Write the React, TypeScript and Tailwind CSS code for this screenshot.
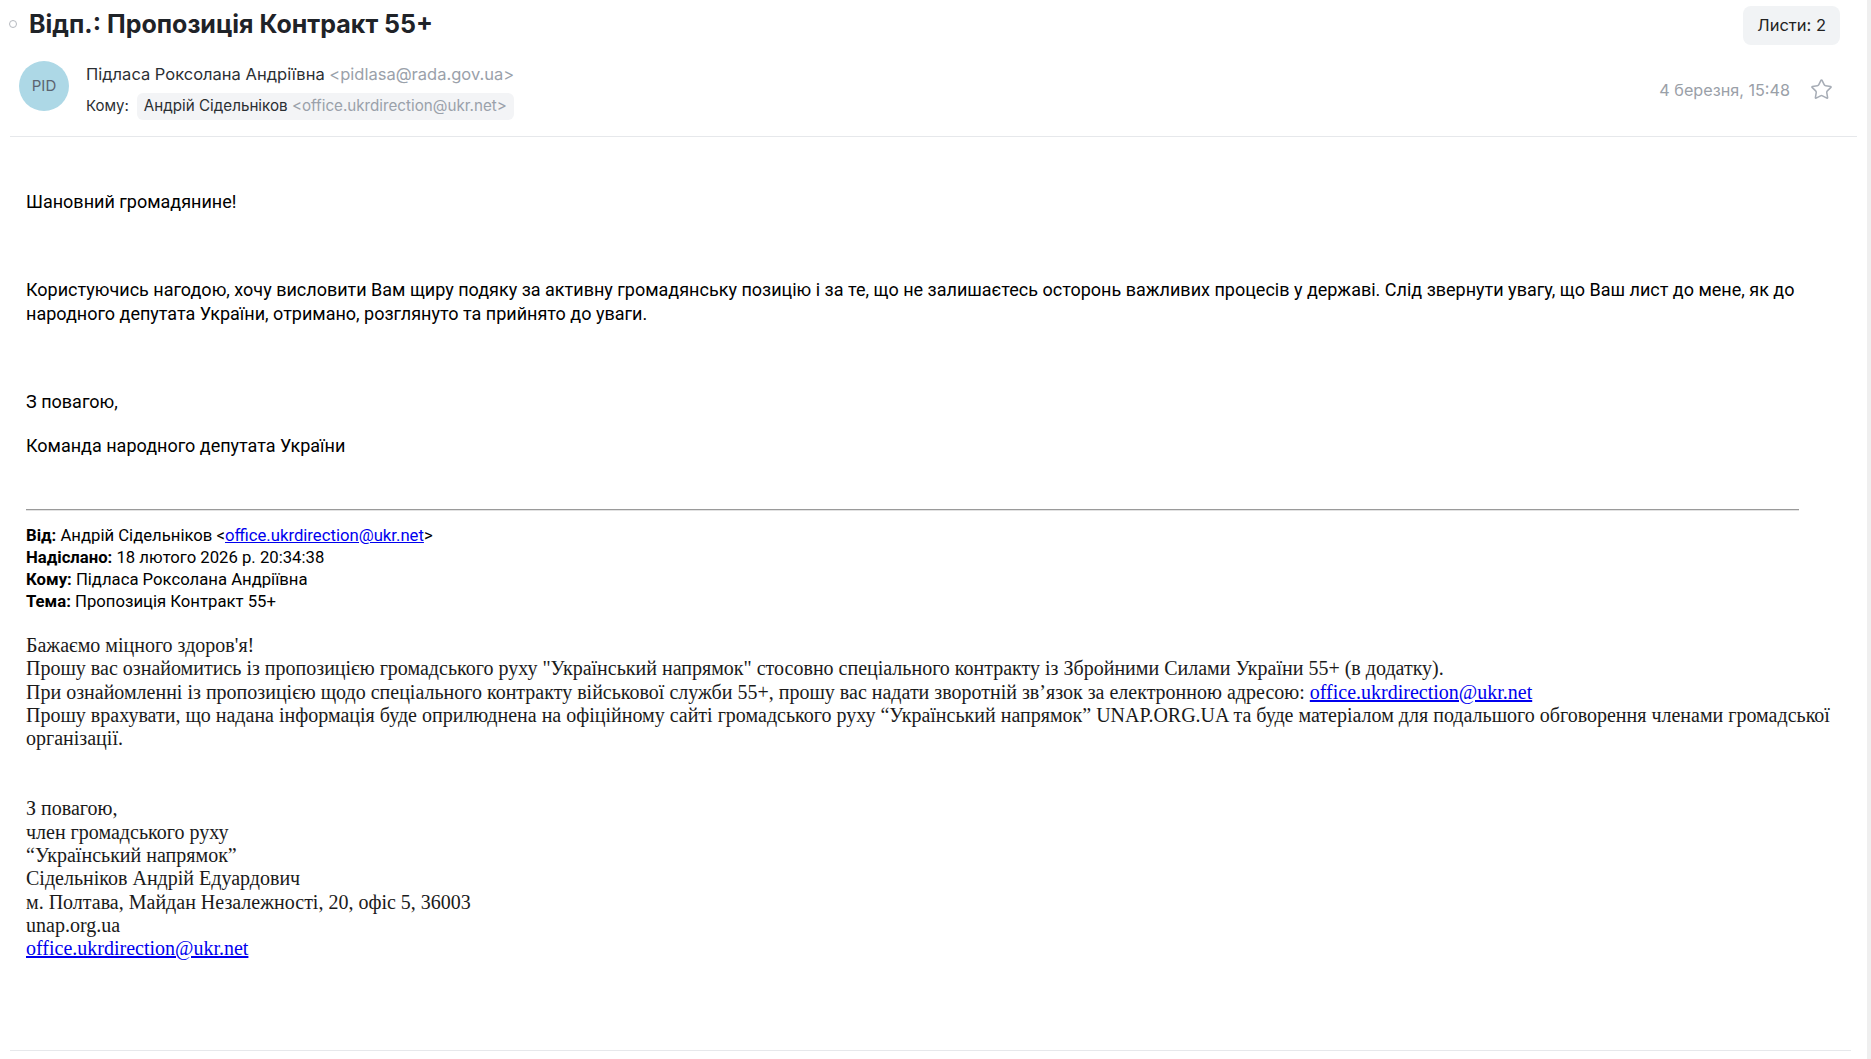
import React from "react";
import { Star } from "lucide-react";

const inter = "font-['Inter','Noto_Sans',sans-serif]";
const sans = "font-['Roboto','Noto_Sans',sans-serif]";
const serif = "font-['Liberation_Serif','Times_New_Roman',serif]";

function Link({ children }: { children: React.ReactNode }) {
  return <a className="text-[#0000ee] underline">{children}</a>;
}

export default function App() {
  return (
    <div className="flex min-h-screen bg-white">
      <div className="flex-1 flex flex-col">
        {/* Title row */}
        <div className={`flex items-start justify-between pl-[9px] pr-[27px] pt-[6px] ${inter}`}>
          <div className="flex items-center gap-[12px] h-[36px]">
            <span className="w-[8px] h-[8px] rounded-full border border-[#b5b9bf]" />
            <h1 className="text-[25px] font-bold leading-[36px] text-[#1f2328]">Відп.: Пропозиція Контракт 55+</h1>
          </div>
          <div className="h-[39px] px-[14px] rounded-lg bg-[#f1f3f5] flex items-center text-[16.5px] text-[#222]">
            Листи: 2
          </div>
        </div>

        {/* Sender row */}
        <div className={`mx-[10px] mt-[16px] pl-[9px] pr-[24px] pb-[16px] border-b border-[#e6e8eb] flex items-start justify-between ${inter}`}>
          <div className="flex items-start gap-[17px]">
            <div className="w-[50px] h-[50px] rounded-full bg-[#add8e6] flex items-center justify-center text-[15px] text-[#5b6470]">
              PID
            </div>
            <div className="flex flex-col pt-[2px]">
              <div className="text-[16.5px] leading-[22px] text-[#2b2f33]">
                Підласа Роксолана Андріївна <span className="text-[#9aa1aa]">&lt;pidlasa@rada.gov.ua&gt;</span>
              </div>
              <div className="flex items-center gap-[8px] mt-[8px]">
                <span className="text-[15px] text-[#2b2f33]">Кому:</span>
                <span className="h-[27px] px-[7px] rounded-md bg-[#f3f4f6] flex items-center text-[15.2px] text-[#2b2f33]">
                  Андрій Сідельніков&nbsp;<span className="text-[#9aa1aa]">&lt;office.ukrdirection@ukr.net&gt;</span>
                </span>
              </div>
            </div>
          </div>
          <div className="flex items-center gap-[20px] pt-[17px]">
            <span className="text-[16.2px] leading-[22px] text-[#9aa0a8]">4 березня, 15:48</span>
            <Star size={23} strokeWidth={1.6} color="#a7adb6" />
          </div>
        </div>

        {/* Body */}
        <div className="pl-[26px] pr-[22px] pt-[53px] text-black">
          <div className={`${sans} text-[18px] leading-[24px]`}>
            <p>Шановний громадянине!</p>
            <p className="mt-[64px]">
              Користуючись нагодою, хочу висловити Вам щиру подяку за активну громадянську позицію і за те, що не залишаєтесь осторонь важливих процесів у державі. Слід звернути увагу, що Ваш лист до мене, як до народного депутата України, отримано, розглянуто та прийнято до уваги.
            </p>
            <p className="mt-[64px]">З повагою,</p>
            <p className="mt-[20px]">Команда народного депутата України</p>
          </div>

          <div className="mt-[51px] w-[1773px] border-t-[1px] border-b-[1px] border-t-[#9a9a9a] border-b-[#e2e2e2]" />

          <div className={`${sans} mt-[14px] text-[16.7px] leading-[22px]`}>
            <div><b>Від:</b> Андрій Сідельніков &lt;<Link>office.ukrdirection@ukr.net</Link>&gt;</div>
            <div><b>Надіслано:</b> 18 лютого 2026 р. 20:34:38</div>
            <div><b>Кому:</b> Підласа Роксолана Андріївна</div>
            <div><b>Тема:</b> Пропозиція Контракт 55+</div>
          </div>

          <div className={`${serif} mt-[21px] text-[20px] leading-[23.3px] text-[#1a1a1a]`}>
            <div>Бажаємо міцного здоров'я!</div>
            <div>Прошу вас ознайомитись із пропозицією громадського руху "Український напрямок" стосовно спеціального контракту із Збройними Силами України 55+ (в додатку).</div>
            <div>При ознайомленні із пропозицією щодо спеціального контракту військової служби 55+, прошу вас надати зворотній зв’язок за електронною адресою: <Link>office.ukrdirection@ukr.net</Link></div>
            <div>Прошу врахувати, що надана інформація буде оприлюднена на офіційному сайті громадського руху “Український напрямок” UNAP.ORG.UA та буде матеріалом для подальшого обговорення членами громадської організації.</div>
            <div className="mt-[47px]">З повагою,</div>
            <div>член громадського руху</div>
            <div>“Український напрямок”</div>
            <div>Сідельніков Андрій Едуардович</div>
            <div>м. Полтава, Майдан Незалежності, 20, офіс 5, 36003</div>
            <div>unap.org.ua</div>
            <div><Link>office.ukrdirection@ukr.net</Link></div>
          </div>
        </div>

        <div className="mx-[10px] mr-[16px] mt-[89px] border-t border-[#e6e8eb]" />
        <div className="h-[8px]" />
      </div>
      <div className="w-[4px] bg-[#efefef]" />
    </div>
  );
}
